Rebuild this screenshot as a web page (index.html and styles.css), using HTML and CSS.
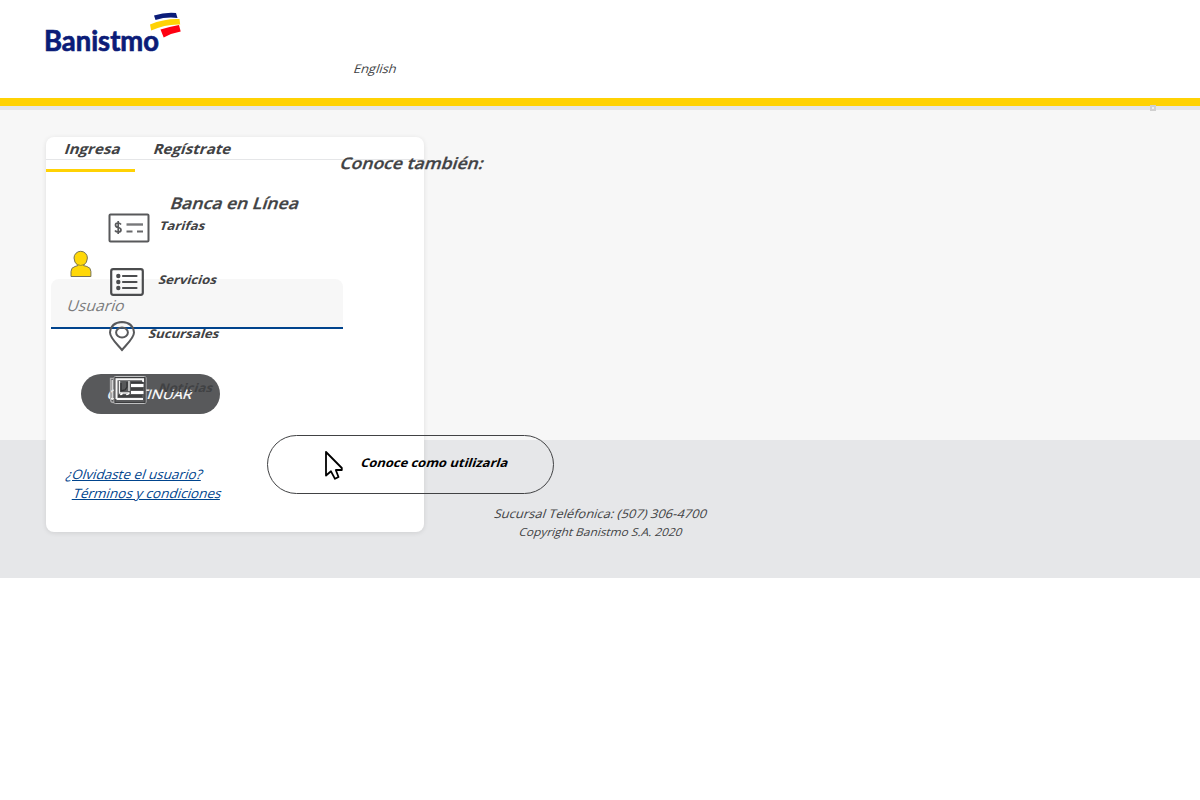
FILE: index.html
```html
<!DOCTYPE html>
<html lang="es">
<head>
<meta charset="utf-8">
<title>Banca en Línea</title>
<link rel="stylesheet" href="styles.css">
</head>
<body>
<header class="header">
  <svg class="logo" width="140" height="54" viewBox="-2 0 140 54">
    <text class="wordmark" x="-1" y="42.500" textLength="115" lengthAdjust="spacingAndGlyphs">Banistmo</text>
    <path fill="#0b1c78" d="M109 7.500q11-3.500 22-2.500l1.500 5q-11-1.500-22 2z"/>
    <path fill="#ffd204" d="M105 16.500q14-6 29.500-5.500l.7 5.500q-15-.5-29 6z"/>
    <path fill="#ff0011" d="M115.500 21.500q9-3 18.500-4.500l1.700 6.500q-9 1.500-17 6z"/>
  </svg>
  <span class="slant lang">English</span>
</header>
<main class="main">
  <section class="card">
    <nav class="tabs">
      <span class="slant tab tab-in">Ingresa</span>
      <span class="slant tab tab-reg">Regístrate</span>
    </nav>
    <div class="tab-line"></div>
    <h1 class="title"><span class="slant t-title">Banca en Línea</span></h1>
    <svg class="user" width="24" height="28" viewBox="0 0 24 28">
      <path d="M2 26.500v-5q0-4 4-5l3-1q-4-3-4-7.500a6.700 6.700 0 0 1 13.400 0q0 4.500-4 7.500l3.500 1q4 1 4 5v5z" fill="#ffd808" stroke="#77735a"/>
      <path d="M8.500 14.500q3 2 6.500 0" fill="none" stroke="#a09224"/>
    </svg>
    <div class="field"><span class="slant t-user">Usuario</span></div>
    <div class="button"><span class="slant t-go">CONTINUAR</span></div>
    <div class="links">
      <span class="slant link t-forgot">¿Olvidaste el usuario?</span>
      <span class="slant link t-terms">Términos y condiciones</span>
    </div>
  </section>
  <span class="slant also">Conoce también:</span>
  <div class="quick">
    <div class="item">
      <svg width="42" height="30" viewBox="0 0 42 30" fill="none" stroke="#58595b" stroke-width="2">
        <rect x="1.500" y="1.500" width="39" height="27" rx="1"/>
        <path d="M18.500 11.500H35" stroke="#77787a" stroke-width="2.400"/><path d="M18.500 18.500h6M29 18.500h6" stroke="#68696b"/>
        <path d="M13 11.500q-1-1.500-3-1.500-2.500 0-2.500 2t2.700 2.500q2.800.5 2.800 2.500t-2.800 2q-2.200 0-3.200-1.500M10.200 8v13" stroke-width="1.700"/>
      </svg>
      <span class="slant t-tar">Tarifas</span>
    </div>
    <div class="item">
      <svg class="i-list" width="34" height="28" viewBox="0 0 34 28" fill="none" stroke="#4b4c4e" stroke-width="2.200">
        <rect x="1.200" y="1.200" width="31.600" height="25.600" rx="2"/>
        <path d="M13 8h13.500M13 14h13.500M13 20h13.500" stroke-linecap="round"/>
        <g fill="#4b4c4e" stroke="none"><circle cx="8.300" cy="8" r="2.200"/><circle cx="8.300" cy="14" r="2.200"/><circle cx="8.300" cy="20" r="2.200"/></g>
      </svg>
      <span class="slant t-ser">Servicios</span>
    </div>
    <div class="item">
      <svg class="i-pin" width="28" height="32" viewBox="0 0 28 32" fill="none" stroke="#58595b" stroke-width="2">
        <path d="M14 29C9 23 2 17 2 11.500Q3 1.500 14 1 25 1.500 26 11.500C26 17 19 23 14 29z"/>
        <ellipse cx="14" cy="11.500" rx="5.900" ry="4.900"/>
      </svg>
      <span class="slant t-suc">Sucursales</span>
    </div>
    <div class="item">
      <svg class="i-news" width="38" height="30" viewBox="0 0 38 30" fill="none">
        <path d="M4.500 3.500H1.500v21q0 3 3 3h2" stroke="#a9a9aa" stroke-width="1.300"/>
        <path d="M3.200 5v20" stroke="#eee" stroke-width="1.300"/>
        <rect x="5" y="1.500" width="32" height="27" rx="1.500" fill="#58595b" stroke="#bfc0c1"/>
        <rect x="6" y="2.500" width="30" height="25" stroke="#3c3d3f" stroke-width="1"/>
        <path d="M7.500 24V4.200H34V7M7.500 24H34" stroke="#f8f8f8" stroke-width="2"/>
        <path d="M10.500 6v12h10M20 6v10" stroke="#eee" stroke-width="1.300"/>
        <path d="M12 8v8l4-1 2-3V7" stroke="#303133" stroke-width="1.300"/>
        <path d="M11 20q2 0 2-2m4 2q2 0 3-2" stroke="#fff" stroke-width="1.500"/>
        <path d="M22 10.500h12.500M22 17.500h12.500" stroke="#fff" stroke-width="3"/>
        <path d="M22 7.500h12M22 14h12M9 21h24" stroke="#37383a" stroke-width="1.500"/>
      </svg>
      <span class="slant t-not">Noticias</span>
    </div>
  </div>
  <div class="howto">
    <svg class="cursor" width="22" height="32" viewBox="0 0 22 32"><path d="M2 2v23.500l5-4.200 4 7.500 3.500-1.800-2.700-7h6v-2z" fill="#fff" stroke="#000" stroke-width="1.800" stroke-linejoin="round"/></svg>
    <span class="slant t-how">Conoce como utilizarla</span>
  </div>
  <i class="dot"></i>
</main>
<footer class="footer">
  <span class="slant t-tel">Sucursal Teléfonica: (507) 306-4700</span>
  <span class="slant t-copy">Copyright Banistmo S.A. 2020</span>
</footer>
</body>
</html>
```
FILE: styles.css
```css
* { box-sizing: border-box; }
body { margin: 0; background: #fff; color: #414244; font-family: "Open Sans", "Noto Sans", sans-serif; }
.slant { --stretch: 1.08; display: inline-block; white-space: nowrap; transform: skewX(-18deg) scaleX(var(--stretch)); transform-origin: 0 50%; line-height: 20px; }
.header { height: 106px; border-bottom: 8px solid #ffd204; padding: 8px 0 0 43px; display: flex; }
.logo { display: block; margin-right: 2px; }
.wordmark { font: 700 28px Lato, sans-serif; fill: #0b1c78; stroke: #0b1c78; stroke-width: .7px; }
.lang { margin: 51px 0 0 169px; height: 20px; font-size: 12px; }
.main { position: relative; height: 334px; background: #f7f7f7; border-top: 4px solid #e5e6e8; padding: 27px 0 0 46px; }
.card { position: relative; z-index: 1; width: 378px; height: 395px; background: #fff; border-radius: 8px; box-shadow: 0 1px 5px rgba(0,0,0,.1); }
.tabs { height: 23px; border-bottom: 1px solid #e5e6e8; display: flex; padding-left: 19px; gap: 37px; }
.tab { font-size: 14px; font-weight: 700; margin-top: 2px; }
.tab-line { width: 89px; height: 3px; margin-top: 9px; background: #ffd204; }
.title { margin: 21px 0 0; height: 20px; text-align: center; font-size: 16px; font-weight: 600; line-height: 20px; }
.t-title, .also { --stretch: 1.1; -webkit-text-stroke: .3px currentColor; }
.t-title { transform-origin: 50% 50%; }
.user { display: block; margin: 37px 0 0 23px; }
.field { width: 292px; height: 50px; margin: 1px 0 0 5px; padding: 16px 17px; background: #f7f7f7; border-bottom: 2px solid #00448d; border-radius: 8px 8px 0 0; line-height: 20px; color: #7b7c7e; }
.t-user { font-size: 15px; --stretch: 1.05; }
.button { width: 139px; height: 40px; margin: 45px 0 0 35px; border-radius: 20px; background: #58595b; color: #fff; display: flex; align-items: center; justify-content: center; }
.t-go { font-size: 13px; --stretch: 1.14; transform-origin: 50% 50%; -webkit-text-stroke: .2px currentColor; }
.links { display: flex; flex-direction: column; align-items: flex-start; padding: 50px 0 0 21px; color: #00448d; font-size: 13px; }
.link { height: 19px; text-decoration: underline; --stretch: 1.04; }
.t-terms { margin-left: 7px; }
.also { position: absolute; z-index: 2; left: 341px; top: 43px; font-size: 16px; font-weight: 600; }
.quick { position: absolute; z-index: 2; left: 108px; top: 103px; font-size: 12px; font-weight: 700; display: grid; grid-auto-rows: 54px; }
.item { display: flex; align-items: flex-start; gap: 10px; }
.i-list { margin: 1px 5px 0 2px; }
.i-pin { margin-right: 3px; }
.i-news { margin-left: 1px; margin-right: 2px; }
.item .slant { margin-top: 3px; margin-left: 0; --stretch: 1.1; }
.howto { position: absolute; z-index: 2; left: 267px; top: 325px; width: 287px; height: 59px; border: 1px solid #414244; border-radius: 30px; display: flex; padding: 14px 0 0 56px; gap: 12px; color: #000; }
.t-how { font-size: 12px; font-weight: 700; margin-top: 3px; }
.dot { position: absolute; left: 1150px; top: -5px; width: 6px; height: 6px; border: 2px solid #d0d0d0; background: #eee; }
.footer { height: 138px; background: #e6e7e9; padding-top: 64px; display: flex; flex-direction: column; align-items: center; }
.footer .slant { height: 18px; transform-origin: 50% 50%; margin-left: 2px; }
.t-tel { font-size: 12px; }
.t-copy { font-size: 11px; }
```
